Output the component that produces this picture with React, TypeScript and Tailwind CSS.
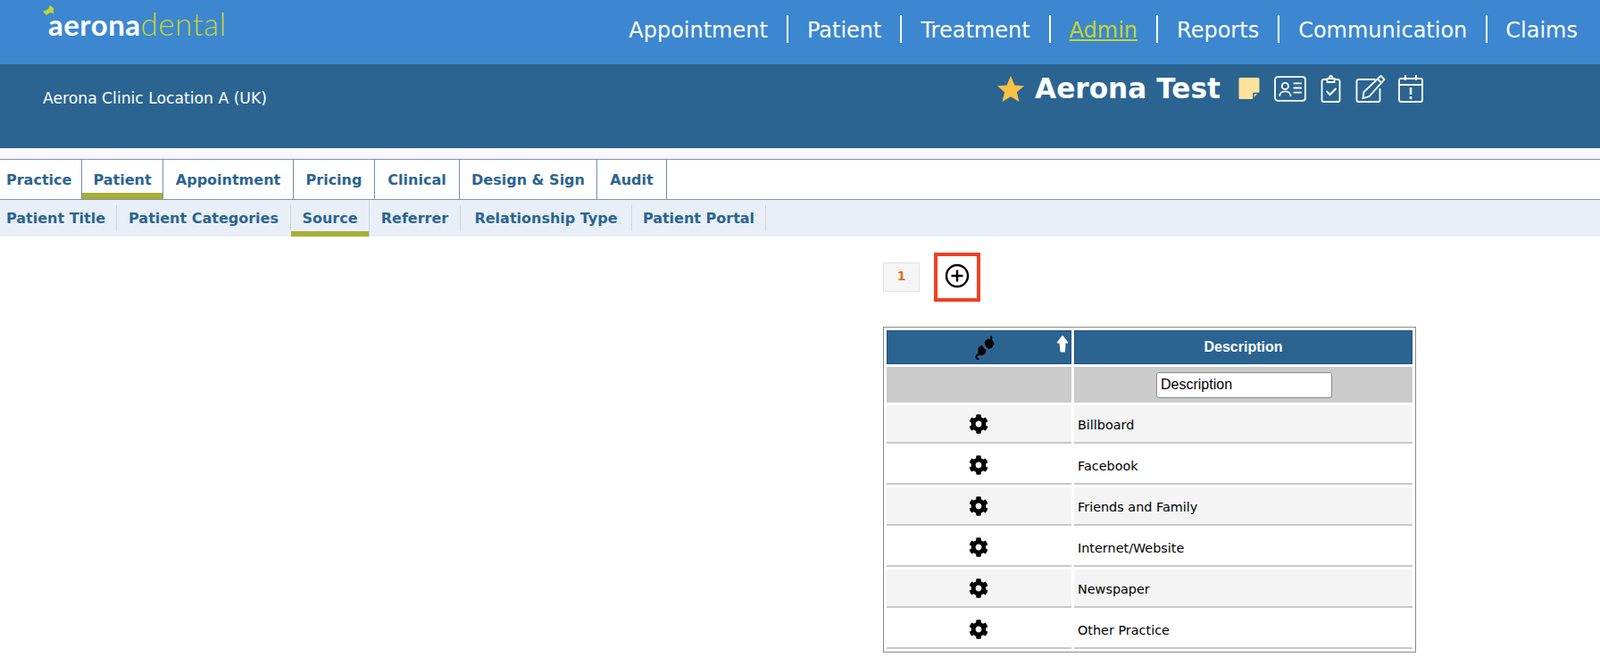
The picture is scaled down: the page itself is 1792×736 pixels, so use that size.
import { FaCog } from 'react-icons/fa';

const mainNav = ['Appointment', 'Patient', 'Treatment', 'Admin', 'Reports', 'Communication', 'Claims'];
const tabs = [
    { label: 'Practice', width: 'w-[92px]' },
    { label: 'Patient', width: 'w-[91px]' },
    { label: 'Appointment', width: 'w-[146px]' },
    { label: 'Pricing', width: 'w-[91px]' },
    { label: 'Clinical', width: 'w-[95px]' },
    { label: 'Design & Sign', width: 'w-[154px]' },
    { label: 'Audit', width: 'w-[78px]' },
];
const subTabs = [
    { label: 'Patient Title', width: 'w-[131px]' },
    { label: 'Patient Categories', width: 'w-[195px]' },
    { label: 'Source', width: 'w-[88px]' },
    { label: 'Referrer', width: 'w-[102px]' },
    { label: 'Relationship Type', width: 'w-[192px]' },
    { label: 'Patient Portal', width: 'w-[150px]' },
];
const sources = ['Billboard', 'Facebook', 'Friends and Family', 'Internet/Website', 'Newspaper', 'Other Practice'];

function Logo() {
    return (
        <div className="relative flex items-baseline pl-[6px] font-['Lato',sans-serif] leading-none">
            <svg className="absolute left-0 top-[-3px]" width="13" height="13" viewBox="0 0 13 13">
                <path d="M0 7 L6 4 L8 0 L12 3 L12 9 L8 8 L4 11 Z" fill="#c5d42f" />
            </svg>
            <span className="text-[33px] font-bold tracking-[0.5px] text-white">aerona</span>
            <span className="text-[35px] font-light tracking-[0.5px] text-[#c5d42f]">dental</span>
        </div>
    );
}

function HeaderIcons() {
    return (
        <div className="flex items-center text-white">
            <svg className="mr-[16px]" width="24" height="26" viewBox="0 0 24 26">
                <path d="M2 1h20a1.500 1.500 0 0 1 1.500 1.500V17l-8 8H2a1.500 1.500 0 0 1-1.500-1.500v-21A1.500 1.500 0 0 1 2 1Z" fill="#fce29b" />
                <path d="M17 24v-5.500h6" fill="none" stroke="#2b6491" strokeWidth="1.500" />
            </svg>
            <svg className="mr-[16px]" width="36" height="29" viewBox="0 0 35 28" fill="none" stroke="currentColor" strokeWidth="1.800">
                <rect x="1" y="1" width="33" height="26" rx="3" />
                <circle cx="12" cy="11" r="3.500" />
                <path d="M6 22c0-7 12-7 12 0M21 8h9M21 13h9M21 18h9" />
            </svg>
            <svg className="mr-[16px]" width="23" height="31" viewBox="0 0 22 31" fill="none" stroke="currentColor" strokeWidth="1.800">
                <path d="M7 5H3a2 2 0 0 0-2 2v21a2 2 0 0 0 2 2h16a2 2 0 0 0 2-2V7a2 2 0 0 0-2-2h-4" />
                <path d="M7 4h8v4H7z" />
                <circle cx="11" cy="2.500" r="1.500" />
                <path d="M6 18l4 4 7-7" strokeWidth="2" />
            </svg>
            <svg className="mr-[14px]" width="34" height="31" viewBox="0 0 33 31" fill="none" stroke="currentColor" strokeWidth="1.800">
                <path d="M22 5H3a2 2 0 0 0-2 2v21a2 2 0 0 0 2 2h22a2 2 0 0 0 2-2V15" />
                <path d="M28 1l4 4L15 24l-7 2 1-7Z" />
                <path d="M25 5l4 4" />
            </svg>
            <svg width="28" height="31" viewBox="0 0 28 31" fill="none" stroke="currentColor" strokeWidth="1.800">
                <rect x="1" y="4" width="26" height="26" rx="2" />
                <path d="M1 11h26M8 0v6M20 0v6" />
                <path d="M14 14v8M14 24v3" strokeWidth="2.500" />
            </svg>
        </div>
    );
}

// the plug icon in the first column header
function PlugIcon() {
    return (
        <svg width="22" height="28" viewBox="0 0 22 28" fill="none" stroke="#000">
            <path d="M11 8 L14 5 L19 6 L21 10 L19 14 L15 15.500 L12.500 13 Z" fill="#000" strokeLinejoin="round" />
            <path d="M17 6c1.500-1 2-2.500 1-4.500" strokeWidth="1.800" />
            <path d="M4 15 L7.500 12 L10 15.500 L12 17 L11 21 L7 23 L4 21 Z" fill="#000" strokeLinejoin="round" />
            <path d="M5 22c-2.500 0-4 2-3.500 3.500 .5 1.500 2 2 3 2" strokeWidth="1.800" />
        </svg>
    );
}

export default function App() {
    return (
        <div className="h-[736px] overflow-hidden bg-white font-['DejaVu_Sans',sans-serif]">
            <header className="flex h-[72px] items-start justify-between bg-[#3c87d0] pl-[48px] pr-[25px]">
                <div className="pt-[9px]">
                    <Logo />
                </div>
                <nav className="flex pt-[17px]">
                    {mainNav.map((item, i) => (
                        <a
                            key={item}
                            className={`flex h-[31px] items-center px-[21px] pt-[3px] text-[24px] leading-none last:pl-[20px] last:pr-0 ${i < mainNav.length - 1 ? 'border-r-2 border-white' : ''} ${item === 'Admin' ? 'text-[#c5d42f] underline' : 'text-white'}`}
                        >
                            {item}
                        </a>
                    ))}
                </nav>
            </header>

            <div className="flex h-[94px] items-start bg-[#2b6491] pl-[48px]">
                <div className="w-[1069px] pt-[28px] text-[17.200px] leading-[20px] text-white">Aerona Clinic Location A (UK)</div>
                <div className="flex items-center pt-[9px]">
                    <svg className="mr-[12px]" width="30" height="29" viewBox="0 0 30 29">
                        <path d="M15 0l4.400 10.500 10.600.8-8.100 7 2.600 10.700-9.500-5.800-9.500 5.800 2.600-10.700-8.100-7 10.600-.8Z" fill="#f7c244" />
                    </svg>
                    <span className="mr-[20px] text-[31.200px] leading-[36px] font-bold text-white">Aerona Test</span>
                    <HeaderIcons />
                </div>
            </div>

            <div className="h-[12px] bg-gradient-to-b from-white to-[#f4f4f4]" />

            <div className="flex h-[46px] border-y border-[#7f97b4] bg-white">
                {tabs.map((tab) => (
                    <a
                        key={tab.label}
                        className={`flex items-center justify-center border-r border-[#6f8fb0] pt-[2px] text-[16px] font-semibold text-[#2b6491] ${tab.width} ${tab.label === 'Patient' ? 'shadow-[inset_0_-7px_0_#a6ae35]' : ''} ${tab.label === 'Practice' ? 'justify-start pl-[7px]' : ''}`}
                    >
                        {tab.label}
                    </a>
                ))}
            </div>

            <div className="flex h-[41px] items-stretch bg-[#e8eff6]">
                {subTabs.map((tab) => (
                    <div
                        key={tab.label}
                        className={`flex items-center justify-center ${tab.width} ${tab.label === 'Source' ? 'shadow-[inset_0_-6px_0_#a6ae35]' : 'my-[6px]'} ${tab.label === 'Patient Title' ? 'justify-start pl-[7px]' : ''} border-r border-[#cfd4d9] text-[16px] font-semibold text-[#2b6491]`}
                    >
                        {tab.label}
                    </div>
                ))}
            </div>

            <main className="pl-[989px] pt-[18px]">
                <div className="flex items-center">
                    <div className="flex h-[33px] w-[41px] items-center justify-center border border-[#e2e2e2] bg-[#f5f5f5] pb-[2px] text-[14px] font-semibold text-[#d9731a]">1</div>
                    <div className="ml-[16px] flex h-[55px] w-[52px] items-center justify-center border-[4px] border-[#ef4123] pb-[3px]">
                        <svg width="28" height="28" viewBox="0 0 28 28" fill="none" stroke="#000" strokeWidth="2.400">
                            <circle cx="14" cy="14" r="12" />
                            <path d="M14 7.500v13M7.500 14h13" />
                        </svg>
                    </div>
                </div>

                <table className="mt-[28px] w-[597px] border-separate border-spacing-[3px] border border-[#8a8a8a]">
                    <tbody>
                        <tr>
                            <th className="relative h-[38px] w-[207px] border border-[#1f4f86] bg-[#2b6491] p-0">
                                <div className="flex justify-center pl-[12px]"><PlugIcon /></div>
                                <svg className="absolute right-[2px] top-[4px]" width="14" height="21" viewBox="0 0 14 21" fill="#fff" stroke="#fff" strokeLinejoin="round">
                                    <path d="M7 1 L13 9 L10 9 L9.500 19 L5 19 L4 9 L1 9 Z" />
                                </svg>
                            </th>
                            <th className="h-[38px] border border-[#1f4f86] bg-[#2b6491] p-0 text-center font-['Liberation_Sans',sans-serif] text-[16px] font-bold text-white">Description</th>
                        </tr>
                        <tr>
                            <td className="h-[40px] bg-[#cbcbcb] p-0" />
                            <td className="h-[40px] bg-[#cbcbcb] p-0 pl-[2px] text-center">
                                <input
                                    readOnly
                                    placeholder="Description"
                                    className="h-[29px] w-[197px] rounded-[3px] border border-[#8a8a8a] bg-white px-[4px] font-['Liberation_Sans',sans-serif] text-[16px] text-black placeholder:text-black"
                                />
                            </td>
                        </tr>
                        {sources.map((source, i) => (
                            <tr key={source}>
                                <td className={`h-[43px] border-b-2 border-[#c8c8c8] p-0 ${i % 2 === 0 ? 'bg-[#f4f4f4]' : 'bg-white'}`}>
                                    <div className="flex justify-center pr-[2px]"><FaCog size={22} className="text-black" /></div>
                                </td>
                                <td className={`h-[43px] border-b-2 border-[#c8c8c8] p-0 pl-[4px] pt-[4px] text-[14.400px] text-black ${i % 2 === 0 ? 'bg-[#f4f4f4]' : 'bg-white'}`}>{source}</td>
                            </tr>
                        ))}
                    </tbody>
                </table>
            </main>
        </div>
    );
}
